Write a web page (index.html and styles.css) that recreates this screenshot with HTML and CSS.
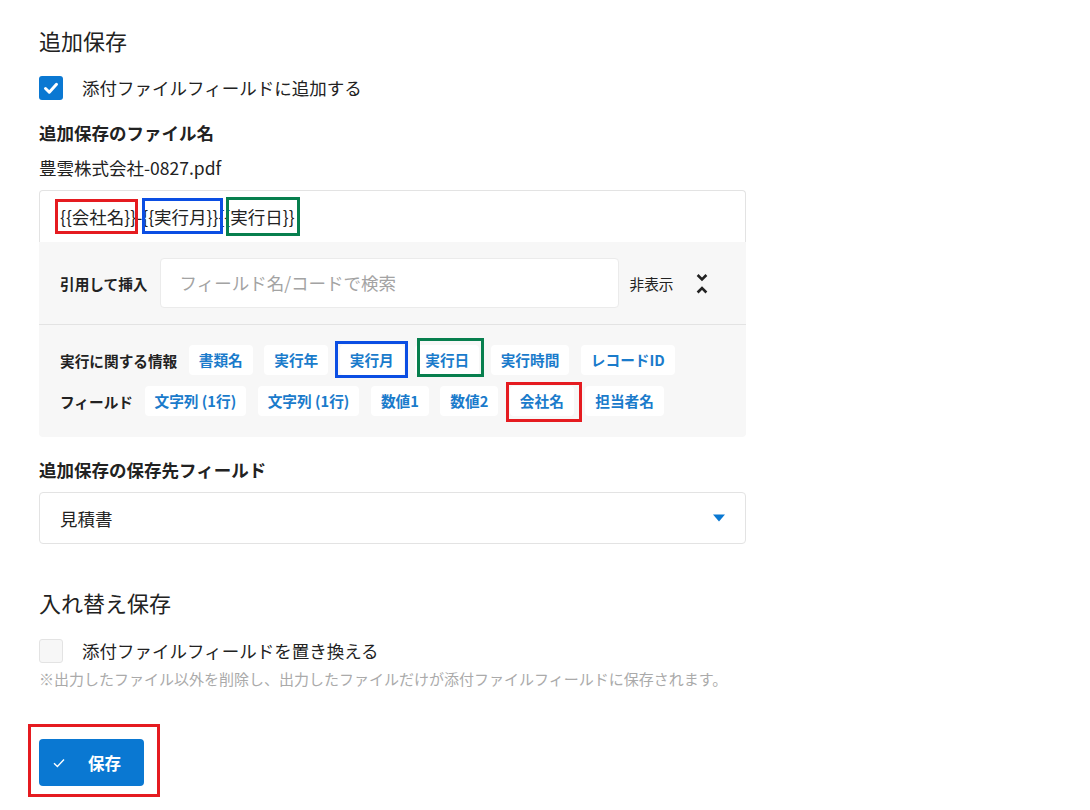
FILE: index.html
```html
<!DOCTYPE html>
<html lang="ja">
<head>
    <meta charset="UTF-8">
    <title>保存設定</title>
    <link rel="stylesheet" href="styles.css">
</head>
<body>
    <div class="page">
        <h2 class="section-title">追加保存</h2>
        <label class="check-row">
            <span class="checkbox is-checked">
                <svg width="24" height="24" viewBox="0 0 24 24"><path d="M6.5 12.5 L10.3 16.2 L17.5 8.3" fill="none" stroke="#fff" stroke-width="3" stroke-linecap="round" stroke-linejoin="round"/></svg>
            </span>
            <span class="check-text">添付ファイルフィールドに追加する</span>
        </label>

        <div class="field-label">追加保存のファイル名</div>
        <div class="preview">豊雲株式会社-0827.pdf</div>

        <div class="template-input">
            {{会社名}}-{{実行月}}{{実行日}}
            <span class="mark mark-red tpl-1"></span>
            <span class="mark mark-blue tpl-2"></span>
            <span class="mark mark-green tpl-3"></span>
        </div>

        <div class="insert-panel">
            <div class="insert-search">
                <span class="insert-label">引用して挿入</span>
                <div class="search-box">フィールド名/コードで検索</div>
                <span class="toggle-text">非表示</span>
                <svg class="toggle-icon" width="12" height="21" viewBox="0 0 12 21">
                    <path d="M1.6 2 L6 6.4 L10.4 2" fill="none" stroke="#222" stroke-width="2.6"/>
                    <path d="M1.6 19.5 L6 15.1 L10.4 19.5" fill="none" stroke="#222" stroke-width="2.6"/>
                </svg>
            </div>
            <div class="insert-list">
                <div class="insert-row">
                    <span class="insert-label">実行に関する情報</span>
                    <span class="chip">書類名</span>
                    <span class="chip">実行年</span>
                    <span class="chip">実行月<span class="mark mark-blue chip-month"></span></span>
                    <span class="chip">実行日<span class="mark mark-green chip-day"></span></span>
                    <span class="chip">実行時間</span>
                    <span class="chip">レコードID</span>
                </div>
                <div class="insert-row">
                    <span class="insert-label">フィールド</span>
                    <span class="chip">文字列 (1行)</span>
                    <span class="chip">文字列 (1行)</span>
                    <span class="chip">数値1</span>
                    <span class="chip">数値2</span>
                    <span class="chip">会社名<span class="mark mark-red chip-company"></span></span>
                    <span class="chip">担当者名</span>
                </div>
            </div>
        </div>

        <div class="field-label field-label-gap">追加保存の保存先フィールド</div>
        <div class="select-box">
            <span>見積書</span>
            <svg width="12" height="8" viewBox="0 0 12 8"><polygon points="0,0.5 12,0.5 6,7.5" fill="#0a78d2"/></svg>
        </div>

        <h2 class="section-title section-title-gap">入れ替え保存</h2>
        <label class="check-row check-row-gap">
            <span class="checkbox"></span>
            <span class="check-text">添付ファイルフィールドを置き換える</span>
        </label>
        <div class="note">※出力したファイル以外を削除し、出力したファイルだけが添付ファイルフィールドに保存されます。</div>

        <button class="save-button">
            <svg width="12" height="10" viewBox="0 0 12 10"><path d="M1 5.2 L4.4 8.5 L11 1.5" fill="none" stroke="#fff" stroke-width="1.4"/></svg>
            <span>保存</span>
            <span class="mark mark-red btn-mark"></span>
        </button>
    </div>
</body>
</html>
```

FILE: styles.css
```css
body {
    margin: 0;
    background: #fff;
    color: #333;
    font-family: "Noto Sans CJK JP", "Noto Sans", sans-serif;
    font-size: 17.5px;
}
.page {
    width: 707px;
    padding-left: 39px;
    padding-bottom: 24px;
}
.section-title {
    margin: 24px 0 0;
    font-size: 22px;
    font-weight: normal;
    line-height: 32px;
    color: #222;
}
.section-title-gap {
    margin-top: 42px;
}
.check-row {
    display: flex;
    align-items: center;
    height: 24px;
    margin-top: 20px;
}
.check-row-gap {
    margin-top: 21px;
}
.checkbox {
    width: 24px;
    height: 24px;
    box-sizing: border-box;
    border: 1px solid #e3e3e3;
    border-radius: 3px;
    background: #f7f7f7;
    margin-right: 19px;
    display: flex;
}
.checkbox.is-checked {
    background: #0a78d2;
    border: none;
}
.check-text {
    line-height: 24px;
    color: #222;
}
.field-label {
    margin-top: 21px;
    font-weight: bold;
    line-height: 24px;
    color: #222;
}
.preview {
    margin-top: 11px;
    line-height: 24px;
    color: #222;
}
.template-input {
    position: relative;
    margin-top: 10px;
    height: 52px;
    box-sizing: border-box;
    border: 1px solid #e3e3e3;
    border-bottom: none;
    border-radius: 4px 4px 0 0;
    padding: 0 20px;
    line-height: 51px;
    color: #222;
}
.insert-panel {
    background: #f7f7f7;
    border-radius: 0 0 4px 4px;
}
.insert-search {
    display: flex;
    align-items: center;
    padding: 16px 21px;
    border-bottom: 1px solid #e3e3e3;
}
.insert-label {
    font-size: 14.67px;
    font-weight: bold;
    color: #222;
    margin-right: 12px;
}
.search-box {
    width: 459px;
    height: 50px;
    box-sizing: border-box;
    background: #fff;
    border: 1px solid #ebebeb;
    border-radius: 4px;
    padding: 0 19px;
    line-height: 48px;
    color: #a3a3a3;
}
.toggle-text {
    margin-left: 11px;
    font-size: 14.67px;
    color: #222;
}
.toggle-icon {
    margin-left: 23px;
}
.insert-list {
    padding: 20px 21px 21px;
    display: flex;
    flex-direction: column;
    gap: 11px;
}
.insert-row {
    display: flex;
    align-items: center;
    gap: 11.5px;
}
.insert-row .insert-label {
    margin-right: 0;
}
.chip {
    position: relative;
    height: 30px;
    line-height: 30px;
    padding: 0 10px;
    background: #fff;
    border-radius: 4px;
    font-size: 14.67px;
    font-weight: bold;
    color: #1a7bcb;
    white-space: nowrap;
}
.field-label-gap {
    margin-top: 21px;
}
.select-box {
    margin-top: 10px;
    height: 52px;
    box-sizing: border-box;
    border: 1px solid #e3e3e3;
    border-radius: 4px;
    padding: 0 20px;
    display: flex;
    align-items: center;
    justify-content: space-between;
    color: #222;
}
.note {
    margin-top: 6px;
    font-size: 15px;
    line-height: 20px;
    color: #aaa;
}
.save-button {
    position: relative;
    margin-top: 50px;
    width: 105px;
    height: 47px;
    border: none;
    border-radius: 4px;
    background: #0a78d2;
    color: #fff;
    font-family: inherit;
    font-size: 16.5px;
    font-weight: bold;
    display: flex;
    align-items: center;
    padding: 0 0 0 14px;
    gap: 23px;
}

/* annotation frames drawn over the screenshot */
.mark {
    position: absolute;
    box-sizing: border-box;
    border: 3px solid;
    pointer-events: none;
}
.mark-red { border-color: #e51b20; }
.mark-blue { border-color: #0b4ee3; }
.mark-green { border-color: #077f4e; }
.tpl-1 { left: 15px; top: 8px; width: 83px; height: 35px; }
.tpl-2 { left: 102px; top: 7px; width: 81px; height: 36px; }
.tpl-3 { left: 186px; top: 6px; width: 74px; height: 39px; }
.chip-month { left: -5px; top: -4px; width: 73px; height: 37px; }
.chip-day { left: 2px; top: -7px; width: 67px; height: 39px; }
.chip-company { left: -4px; top: -4px; width: 76px; height: 40px; }
.btn-mark { left: -11px; top: -15px; width: 132px; height: 73px; }
```
